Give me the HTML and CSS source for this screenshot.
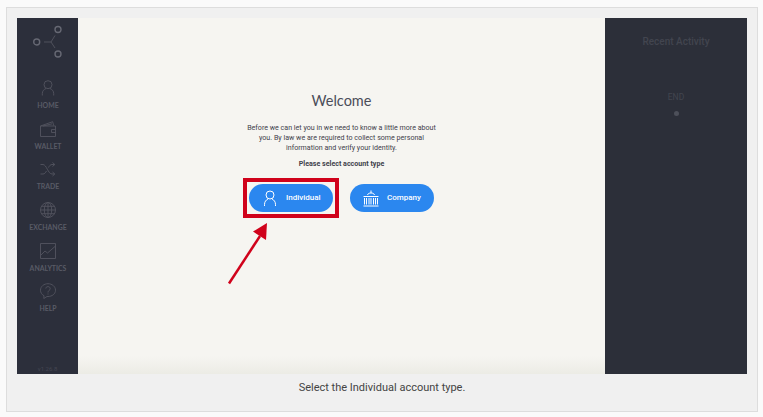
FILE: index.html
```
<!DOCTYPE html>
<html lang="en">
<head>
<meta charset="utf-8">
<title>Welcome</title>
<link rel="stylesheet" href="styles.css">
</head>
<body>
<figure class="figure">
  <div class="app">
    <nav class="sidebar">
      <svg class="logo" viewBox="0 0 30 34"><g class="rings"><circle cx="25" cy="4.500" r="3"/><circle cx="3.700" cy="17" r="3"/><circle cx="25" cy="29" r="3"/></g><path d="M11 17h7M22 10.500L18 17l4 6"/></svg>
      <a class="item"><svg viewBox="0 0 16 16"><circle cx="8" cy="4.700" r="4"/><path d="M2.300 15.500V13.500C2.300 10.800 4 9.500 6 8.500M13.700 15.500V13.500C13.700 10.800 12 9.500 10 8.500"/></svg><span>HOME</span></a>
      <a class="item"><svg viewBox="0 0 16 16"><path d="M.5 5h15v10.500H.5zM.5 5L12.700.7l1 4M15.500 8.500h-4v3h4M3 5l9-2.200"/></svg><span>WALLET</span></a>
      <a class="item"><svg viewBox="0 0 16 16"><path d="M.5 3.500H3c3.500 0 5 9.500 9 9.500h2.500M.5 13H3c1.500 0 2.600-1.300 3.500-3M8.500 6.500C9.400 4.800 10.400 3.500 12 3.500h2.500M12.500 1.500l2.300 2-2.300 2M12.500 11l2.300 2-2.300 2"/></svg><span>TRADE</span></a>
      <a class="item"><svg viewBox="0 0 16 16"><circle cx="8" cy="8" r="7.500"/><ellipse cx="8" cy="8" rx="3.700" ry="7.500"/><path d="M8 .5v15M.5 8h15M1.500 4.300h13M1.500 11.700h13"/></svg><span>EXCHANGE</span></a>
      <a class="item"><svg viewBox="0 0 16 16"><path d="M.5.5h15v15H.5zM1 12l4-4 2.500 2L15 3.500"/></svg><span>ANALYTICS</span></a>
      <a class="item"><svg viewBox="0 0 16 16"><path d="M4 12.700C1.800 11.700.5 9.500.5 7.200.5 3.500 3.900.7 8 .7s7.500 2.800 7.500 6.500-3.400 6.300-7.500 6.300H7L3.800 15.500zM5.800 5.500C5.800 3 10.200 3 10.200 5.600 10.200 7.400 8 7.300 8 9.500M8 10.500v1"/></svg><span>HELP</span></a>
      <span class="version">v1.26.8</span>
    </nav>
    <main class="main">
      <h1>Welcome</h1>
      <p class="intro">Before we can let you in we need to know a little more about<br>you. By law we are required to collect some personal<br>information and verify your identity.</p>
      <p class="prompt">Please select account type</p>
      <div class="choices">
        <button class="pill individual"><svg viewBox="0 0 16 17"><circle cx="8" cy="5" r="4"/><path d="M2.500 16V14.500C2.500 11.700 4 10 6 9M13.500 16V14.500C13.500 11.700 12 10 10 9"/></svg><span>Individual</span>
          <i class="highlight"></i>
          <svg class="arrow" viewBox="0 0 44 64"><path class="shaft" d="M3 60.500L34 13"/><path class="head" d="M41 0L27 8.500 40 17z"/></svg>
        </button>
        <button class="pill company"><svg viewBox="0 0 16 17"><path d="M.5 6.500h15M.5 16h15M1.500 8v6.500M3.500 8v6.500M6 8v6.500M8 8v6.500M10.500 8v6.500M12.500 8v6.500M14.500 8v6.500M4.500 5C5 3.500 6.200 3 8 3s3 .5 3.500 2M8 .5V3"/></svg><span>Company</span></button>
      </div>
    </main>
    <aside class="activity">
      <h2>Recent Activity</h2>
      <span class="end">END</span>
      <i class="dot"></i>
    </aside>
  </div>
  <figcaption>Select the Individual account type.</figcaption>
</figure>
</body>
</html>
```
FILE: styles.css
```
* { box-sizing: border-box; }
body { margin: 0; padding: 7px 6px 0; background: #fafafa; font-family: Roboto, sans-serif; overflow: hidden; }
h1, h2, p { margin: 0; font-weight: 400; }
svg { fill: none; display: block; }
.figure { margin: 0; width: 752px; height: 405px; padding: 10px; border: 1px solid #ddd; background: #f0f0f0; }
.app { display: grid; grid-template-columns: 61px 527px 142px; height: 356px; }
.sidebar { display: flex; flex-direction: column; align-items: center; background: #2c2f3b; padding-top: 7px; color: #595b66; font-family: Lato, sans-serif; }
.sidebar svg { stroke: #535560; stroke-width: .9; }
.logo { width: 30px; height: 34px; margin-bottom: 21px; }
.sidebar .rings { stroke: #666873; stroke-width: 1.4; }
.item { display: flex; flex-direction: column; align-items: center; width: 60px; height: 40.7px; margin-left: 1px; flex: none; }
.item svg { width: 16px; height: 16px; margin-bottom: 5px; }
.item span { font-size: 6.900px; line-height: 9px; font-weight: 700; }
.version { margin-top: auto; padding-bottom: 1px; font: 6px/8px Roboto, sans-serif; color: #444652; }
.main { display: flex; flex-direction: column; align-items: center; text-align: center; padding-top: 73px; background: linear-gradient(#f6f5f1, #f6f5f1 95%, #ecece5); color: #3f414b; }
.main h1 { font: 14.500px/20px Lato, sans-serif; color: #4b4d59; }
.intro { font-size: 7.100px; line-height: 10px; margin-top: 12px; }
.prompt { font-size: 7.100px; line-height: 10px; font-weight: 700; margin-top: 6px; }
.choices { display: flex; gap: 17px; margin-top: 15px; }
.pill { position: relative; display: flex; align-items: center; width: 84px; height: 28px; border: 0; border-radius: 14px; padding: 0 0 0 13px; gap: 8px; background: #2b87ef; color: #fff; font: 500 8px Roboto, sans-serif; }
.pill > svg:first-child { width: 16px; height: 17px; stroke: #fff; stroke-width: 1; flex: none; }
.pill > span { margin-top: -2px; }
.highlight { position: absolute; inset: -6px; border: 4px solid #d0021b; }
.pill .arrow { position: absolute; left: -23px; top: 39px; width: 44px; height: 64px; }
.shaft { stroke: #d0021b; stroke-width: 2.500; }
.head { fill: #d0021b; }
.activity { display: flex; flex-direction: column; align-items: center; background: #2c2f39; color: #42454f; padding-top: 17px; }
.activity h2 { font-size: 10px; line-height: 14px; font-weight: 500; }
.end { font-size: 8.500px; line-height: 10px; margin-top: 43px; }
.dot { width: 5px; height: 5px; border-radius: 50%; background: #4d505a; margin-top: 9px; }
figcaption { font-size: 11px; line-height: 14px; margin-top: 7px; text-align: center; color: #444; }
```
